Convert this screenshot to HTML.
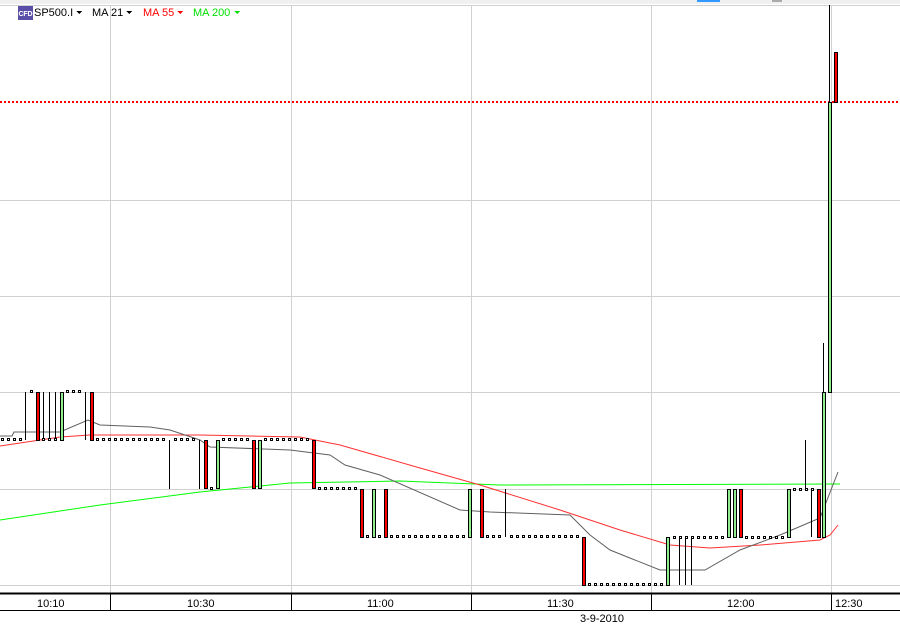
<!DOCTYPE html>
<html><head><style>
html,body{margin:0;padding:0;background:#fff;width:900px;height:625px;overflow:hidden;font-family:"Liberation Sans",sans-serif;}
svg{position:absolute;left:0;top:0}
</style></head><body>
<svg width="900" height="625" xmlns="http://www.w3.org/2000/svg" shape-rendering="crispEdges">
<rect x="0" y="0" width="900" height="4" fill="#f0f0f0"/>
<rect x="697" y="0" width="23" height="2" fill="#3399ff"/>
<rect x="772" y="0" width="10" height="2" fill="#aaa"/>
<g stroke="#d0d0d0" stroke-width="1">
<line x1="0" y1="5.5" x2="900" y2="5.5"/><line x1="0" y1="200.5" x2="900" y2="200.5"/><line x1="0" y1="296.5" x2="900" y2="296.5"/><line x1="0" y1="392.5" x2="900" y2="392.5"/><line x1="0" y1="489.5" x2="900" y2="489.5"/><line x1="0" y1="585.5" x2="900" y2="585.5"/>
<line x1="110.5" y1="5" x2="110.5" y2="593"/><line x1="291.5" y1="5" x2="291.5" y2="593"/><line x1="471.5" y1="5" x2="471.5" y2="593"/><line x1="651.5" y1="5" x2="651.5" y2="593"/><line x1="831.5" y1="5" x2="831.5" y2="593"/>
</g>
<line x1="0" y1="102" x2="900" y2="102" stroke="#f00" stroke-width="2" stroke-dasharray="2,2"/>
<g fill="none" shape-rendering="auto">
<polyline stroke="#00ff00" points="0,520 100,505 200,492 290,483 400,481 500,485 840,484"/>
<polyline stroke="#ff3030" points="0,446 60,437 90,435 200,435 300,437 340,445 420,468 480,485 560,510 620,530 670,545 710,548 760,545 820,540 830,535 838,525"/>
<polyline stroke="#606060" points="0,436 12,436 14,432 60,432 88,420 100,425 150,427 170,430 200,440 210,447 290,450 330,455 345,465 380,475 460,510 490,512 570,515 590,535 610,550 660,570 705,570 740,550 780,535 820,518 838,472"/>
</g>
<g stroke="#000" stroke-width="1">
<line x1="25.5" y1="392" x2="25.5" y2="440"/><line x1="43.5" y1="392" x2="43.5" y2="440"/><line x1="49.5" y1="392" x2="49.5" y2="440"/><line x1="55.5" y1="392" x2="55.5" y2="440"/><line x1="85.5" y1="392" x2="85.5" y2="440"/><line x1="169.5" y1="440" x2="169.5" y2="489"/><line x1="199.5" y1="440" x2="199.5" y2="489"/><line x1="505.5" y1="489" x2="505.5" y2="537"/><line x1="679.5" y1="537" x2="679.5" y2="585"/><line x1="685.5" y1="537" x2="685.5" y2="585"/><line x1="691.5" y1="537" x2="691.5" y2="585"/><line x1="805.5" y1="440" x2="805.5" y2="489"/><line x1="811.5" y1="489" x2="811.5" y2="537"/><line x1="823.5" y1="343" x2="823.5" y2="392"/><line x1="829.5" y1="5" x2="829.5" y2="102"/>
</g>
<g stroke="#000" stroke-width="1">
<rect x="36.5" y="392.5" width="3" height="48" fill="#f00"/><rect x="60.5" y="392.5" width="3" height="48" fill="#90ee90"/><rect x="90.5" y="392.5" width="3" height="48" fill="#f00"/>
<rect x="204.5" y="440.5" width="3" height="48" fill="#f00"/><rect x="216.5" y="440.5" width="3" height="48" fill="#90ee90"/><rect x="252.5" y="440.5" width="3" height="48" fill="#f00"/><rect x="258.5" y="440.5" width="3" height="48" fill="#90ee90"/><rect x="312.5" y="440.5" width="3" height="48" fill="#f00"/>
<rect x="360.5" y="489.5" width="3" height="48" fill="#f00"/><rect x="372.5" y="489.5" width="3" height="48" fill="#90ee90"/><rect x="384.5" y="489.5" width="3" height="48" fill="#f00"/><rect x="468.5" y="489.5" width="3" height="48" fill="#90ee90"/><rect x="480.5" y="489.5" width="3" height="48" fill="#f00"/>
<rect x="582.5" y="537.5" width="3" height="48" fill="#f00"/><rect x="666.5" y="537.5" width="3" height="48" fill="#90ee90"/>
<rect x="727.5" y="489.5" width="3" height="48" fill="#90ee90"/><rect x="733.5" y="489.5" width="3" height="48" fill="#90ee90"/><rect x="739.5" y="489.5" width="3" height="48" fill="#f00"/><rect x="787.5" y="489.5" width="3" height="48" fill="#90ee90"/><rect x="817.5" y="489.5" width="3" height="48" fill="#f00"/>
<rect x="822.5" y="392.5" width="3" height="145" fill="#90ee90"/><rect x="828.5" y="102.5" width="3" height="290" fill="#90ee90"/><rect x="834.5" y="52.5" width="3" height="50" fill="#f00"/>
</g>
<g fill="#fff" stroke="#000" stroke-width="1">
<rect x="1.5" y="438.5" width="2" height="2"/><rect x="7.5" y="438.5" width="2" height="2"/><rect x="13.5" y="438.5" width="2" height="2"/><rect x="19.5" y="438.5" width="2" height="2"/>
<rect x="30.5" y="390.5" width="2" height="2"/><rect x="66.5" y="390.5" width="2" height="2"/><rect x="72.5" y="390.5" width="2" height="2"/><rect x="78.5" y="390.5" width="2" height="2"/>
<rect x="42.5" y="438.5" width="2" height="2"/><rect x="48.5" y="438.5" width="2" height="2"/><rect x="54.5" y="438.5" width="2" height="2"/>
<rect x="96.5" y="438.5" width="2" height="2"/><rect x="102.5" y="438.5" width="2" height="2"/><rect x="108.5" y="438.5" width="2" height="2"/><rect x="114.5" y="438.5" width="2" height="2"/><rect x="120.5" y="438.5" width="2" height="2"/><rect x="126.5" y="438.5" width="2" height="2"/><rect x="132.5" y="438.5" width="2" height="2"/><rect x="138.5" y="438.5" width="2" height="2"/><rect x="144.5" y="438.5" width="2" height="2"/><rect x="150.5" y="438.5" width="2" height="2"/><rect x="156.5" y="438.5" width="2" height="2"/><rect x="162.5" y="438.5" width="2" height="2"/><rect x="174.5" y="438.5" width="2" height="2"/><rect x="180.5" y="438.5" width="2" height="2"/><rect x="186.5" y="438.5" width="2" height="2"/><rect x="192.5" y="438.5" width="2" height="2"/>
<rect x="210.5" y="487.5" width="2" height="2"/>
<rect x="222.5" y="438.5" width="2" height="2"/><rect x="228.5" y="438.5" width="2" height="2"/><rect x="234.5" y="438.5" width="2" height="2"/><rect x="240.5" y="438.5" width="2" height="2"/><rect x="246.5" y="438.5" width="2" height="2"/><rect x="264.5" y="438.5" width="2" height="2"/><rect x="270.5" y="438.5" width="2" height="2"/><rect x="276.5" y="438.5" width="2" height="2"/><rect x="282.5" y="438.5" width="2" height="2"/><rect x="288.5" y="438.5" width="2" height="2"/><rect x="294.5" y="438.5" width="2" height="2"/><rect x="300.5" y="438.5" width="2" height="2"/><rect x="306.5" y="438.5" width="2" height="2"/>
<rect x="318.5" y="487.5" width="2" height="2"/><rect x="324.5" y="487.5" width="2" height="2"/><rect x="330.5" y="487.5" width="2" height="2"/><rect x="336.5" y="487.5" width="2" height="2"/><rect x="342.5" y="487.5" width="2" height="2"/><rect x="348.5" y="487.5" width="2" height="2"/><rect x="354.5" y="487.5" width="2" height="2"/>
<rect x="366.5" y="535.5" width="2" height="2"/><rect x="378.5" y="535.5" width="2" height="2"/>
<rect x="390.5" y="535.5" width="2" height="2"/><rect x="396.5" y="535.5" width="2" height="2"/><rect x="402.5" y="535.5" width="2" height="2"/><rect x="408.5" y="535.5" width="2" height="2"/><rect x="414.5" y="535.5" width="2" height="2"/><rect x="420.5" y="535.5" width="2" height="2"/><rect x="426.5" y="535.5" width="2" height="2"/><rect x="432.5" y="535.5" width="2" height="2"/><rect x="438.5" y="535.5" width="2" height="2"/><rect x="444.5" y="535.5" width="2" height="2"/><rect x="450.5" y="535.5" width="2" height="2"/><rect x="456.5" y="535.5" width="2" height="2"/><rect x="462.5" y="535.5" width="2" height="2"/>
<rect x="486.5" y="535.5" width="2" height="2"/><rect x="492.5" y="535.5" width="2" height="2"/><rect x="498.5" y="535.5" width="2" height="2"/><rect x="510.5" y="535.5" width="2" height="2"/><rect x="516.5" y="535.5" width="2" height="2"/><rect x="522.5" y="535.5" width="2" height="2"/><rect x="528.5" y="535.5" width="2" height="2"/><rect x="534.5" y="535.5" width="2" height="2"/><rect x="540.5" y="535.5" width="2" height="2"/><rect x="546.5" y="535.5" width="2" height="2"/><rect x="552.5" y="535.5" width="2" height="2"/><rect x="558.5" y="535.5" width="2" height="2"/><rect x="564.5" y="535.5" width="2" height="2"/><rect x="570.5" y="535.5" width="2" height="2"/><rect x="576.5" y="535.5" width="2" height="2"/>
<rect x="588.5" y="583.5" width="2" height="2"/><rect x="594.5" y="583.5" width="2" height="2"/><rect x="600.5" y="583.5" width="2" height="2"/><rect x="606.5" y="583.5" width="2" height="2"/><rect x="612.5" y="583.5" width="2" height="2"/><rect x="618.5" y="583.5" width="2" height="2"/><rect x="624.5" y="583.5" width="2" height="2"/><rect x="630.5" y="583.5" width="2" height="2"/><rect x="636.5" y="583.5" width="2" height="2"/><rect x="642.5" y="583.5" width="2" height="2"/><rect x="648.5" y="583.5" width="2" height="2"/><rect x="654.5" y="583.5" width="2" height="2"/><rect x="660.5" y="583.5" width="2" height="2"/>
<rect x="673.5" y="536.5" width="2" height="2"/><rect x="679.5" y="536.5" width="2" height="2"/><rect x="685.5" y="536.5" width="2" height="2"/><rect x="691.5" y="536.5" width="2" height="2"/><rect x="697.5" y="536.5" width="2" height="2"/><rect x="703.5" y="536.5" width="2" height="2"/><rect x="709.5" y="536.5" width="2" height="2"/><rect x="715.5" y="536.5" width="2" height="2"/><rect x="721.5" y="536.5" width="2" height="2"/>
<rect x="745.5" y="536.5" width="2" height="2"/><rect x="751.5" y="536.5" width="2" height="2"/><rect x="757.5" y="536.5" width="2" height="2"/><rect x="763.5" y="536.5" width="2" height="2"/><rect x="769.5" y="536.5" width="2" height="2"/><rect x="775.5" y="536.5" width="2" height="2"/><rect x="781.5" y="536.5" width="2" height="2"/>
<rect x="793.5" y="488.5" width="2" height="2"/><rect x="799.5" y="488.5" width="2" height="2"/><rect x="805.5" y="488.5" width="2" height="2"/><rect x="811.5" y="488.5" width="2" height="2"/>
</g>
<line x1="0" y1="593.5" x2="900" y2="593.5" stroke="#000" stroke-width="2"/>
<line x1="0" y1="610.5" x2="900" y2="610.5" stroke="#000" stroke-width="1"/>
<g stroke="#000"><line x1="110.5" y1="594" x2="110.5" y2="610"/><line x1="291.5" y1="594" x2="291.5" y2="610"/><line x1="471.5" y1="594" x2="471.5" y2="610"/><line x1="651.5" y1="594" x2="651.5" y2="610"/><line x1="831.5" y1="594" x2="831.5" y2="610"/></g>
<g font-family="Liberation Sans, sans-serif" font-size="11" fill="#000">
<text x="37" y="607">10:10</text><text x="187" y="607">10:30</text><text x="367" y="607">11:00</text><text x="547" y="607">11:30</text><text x="727" y="607">12:00</text><text x="835" y="607">12:30</text>
<text x="580" y="622">3-9-2010</text>
</g>
<rect x="18" y="6" width="15" height="14" fill="#5a4fa8"/>
<text x="18.5" y="16" font-family="Liberation Sans, sans-serif" font-size="7" font-weight="bold" fill="#fff" textLength="14">CFD</text>
<g font-family="Liberation Sans, sans-serif" font-size="11">
<text x="34" y="16" fill="#000">SP500.I</text><path d="M76 11h6l-3 3z" fill="#000"/>
<text x="92" y="16" fill="#000">MA 21</text><path d="M126 11h6l-3 3z" fill="#000"/>
<text x="143" y="16" fill="#f00">MA 55</text><path d="M177 11h6l-3 3z" fill="#f00"/>
<text x="193" y="16" fill="#00e000">MA 200</text><path d="M234 11h6l-3 3z" fill="#00e000"/>
</g>
</svg>
</body></html>
